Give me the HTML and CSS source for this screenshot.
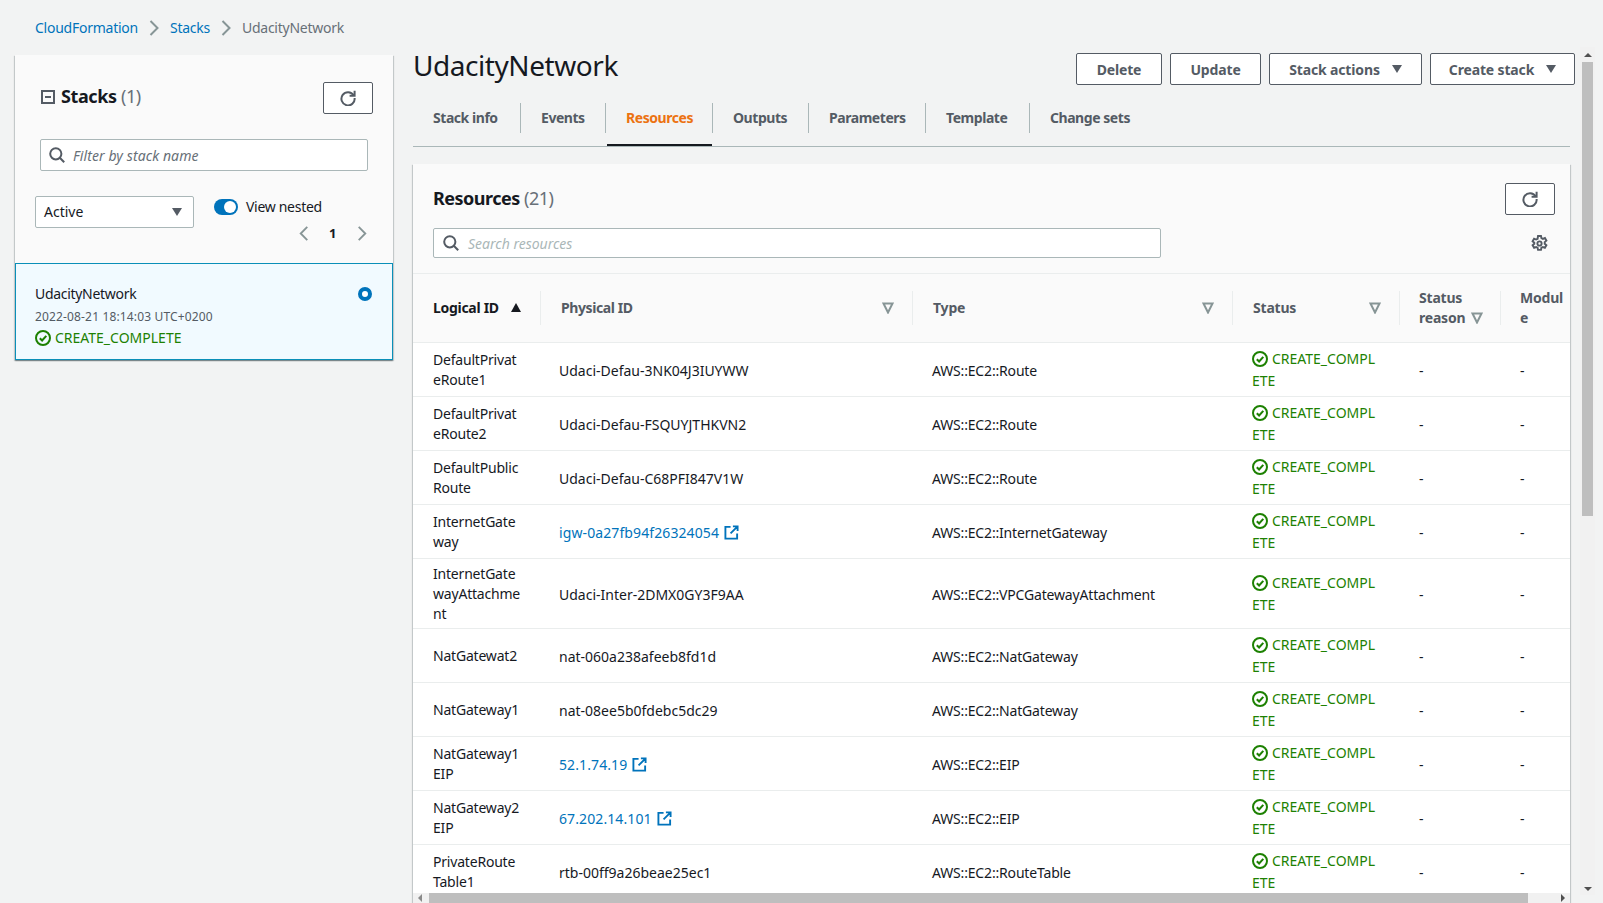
FILE: index.html
```html
<!DOCTYPE html>
<html>

<head>
    <meta charset="UTF-8">
    <title>UdacityNetwork - CloudFormation</title>
    <link rel="stylesheet" href="styles.css">
</head>

<body>
    <svg class="defs" width="0" height="0">
        <symbol id="i-ok" viewBox="0 0 16 16">
            <circle cx="8" cy="8" r="7" fill="none" stroke="currentColor" stroke-width="2"/>
            <path d="M4.8 8.2l2.3 2.3 4.2-4.6" fill="none" stroke="currentColor" stroke-width="2"/>
        </symbol>
        <symbol id="i-ext" viewBox="0 0 16 16">
            <path d="M7 2H1.5v12.5H14V9M9.5 1.5h5v5M14.5 1.5L7 9" fill="none" stroke="currentColor" stroke-width="2"/>
        </symbol>
        <symbol id="i-refresh" viewBox="0 0 16 16">
            <path d="M13.6 5.2A6.6 6.6 0 1 0 14.6 8" fill="none" stroke="currentColor" stroke-width="2"/>
            <path d="M14.6 .8v5h-5" fill="none" stroke="currentColor" stroke-width="2"/>
        </symbol>
        <symbol id="i-search" viewBox="0 0 16 16">
            <circle cx="6.8" cy="6.8" r="5.6" fill="none" stroke="currentColor" stroke-width="2"/>
            <path d="M10.8 10.8l4.4 4.4" fill="none" stroke="currentColor" stroke-width="2"/>
        </symbol>
        <symbol id="i-filter" viewBox="0 0 12 12">
            <path d="M1.5 1.5h9L6 10.5z" fill="none" stroke="currentColor" stroke-width="2"/>
        </symbol>
    </svg>

    <div class="page">
        <div class="crumbs">
            <a>CloudFormation</a>
            <svg class="crumb-sep" viewBox="0 0 10 16"><path d="M1.5 1l7 7-7 7" fill="none" stroke="currentColor" stroke-width="2"/></svg>
            <a>Stacks</a>
            <svg class="crumb-sep" viewBox="0 0 10 16"><path d="M1.5 1l7 7-7 7" fill="none" stroke="currentColor" stroke-width="2"/></svg>
            <span>UdacityNetwork</span>
        </div>

        <div class="layout">
            <!-- 左侧 stacks 列表 -->
            <div class="side">
                <div class="side-head">
                    <div class="side-title">
                        <svg class="collapse" viewBox="0 0 14 14"><path d="M1 1h12v12H1zM4 7h6" fill="none" stroke="currentColor" stroke-width="2"/></svg>
                        <h2>Stacks <span class="count">(1)</span></h2>
                    </div>
                    <button class="btn btn-icon"><svg class="icon"><use href="#i-refresh"/></svg></button>
                </div>
                <div class="input side-search">
                    <svg class="icon"><use href="#i-search"/></svg>
                    <span>Filter by stack name</span>
                </div>
                <div class="side-filters">
                    <div class="select">Active<i class="caret"></i></div>
                    <div class="side-opts">
                        <div class="nested"><i class="toggle"></i>View nested</div>
                        <div class="pager">
                            <svg class="pager-arrow" viewBox="0 0 10 16"><path d="M8.5 1l-7 7 7 7" fill="none" stroke="currentColor" stroke-width="2"/></svg>
                            <b>1</b>
                            <svg class="pager-arrow" viewBox="0 0 10 16"><path d="M1.5 1l7 7-7 7" fill="none" stroke="currentColor" stroke-width="2"/></svg>
                        </div>
                    </div>
                </div>
                <div class="stack-item">
                    <div class="stack-info">
                        <div class="stack-name">UdacityNetwork</div>
                        <div class="stack-date">2022-08-21 18:14:03 UTC+0200</div>
                        <div class="ok"><svg class="ok-icon"><use href="#i-ok"/></svg>CREATE_COMPLETE</div>
                    </div>
                    <i class="radio"></i>
                </div>
            </div>

            <!-- 右侧详情 -->
            <div class="main">
                <div class="main-head">
                    <h1>UdacityNetwork</h1>
                    <div class="actions">
                        <button class="btn btn-delete">Delete</button>
                        <button class="btn btn-update">Update</button>
                        <button class="btn btn-stack">Stack actions<i class="caret"></i></button>
                        <button class="btn btn-create">Create stack<i class="caret"></i></button>
                    </div>
                </div>
                <div class="tabs">
                    <a class="tab">Stack info</a>
                    <a class="tab">Events</a>
                    <a class="tab active">Resources</a>
                    <a class="tab">Outputs</a>
                    <a class="tab">Parameters</a>
                    <a class="tab">Template</a>
                    <a class="tab">Change sets</a>
                </div>

                <div class="card">
                    <div class="card-head">
                        <div class="card-top">
                            <h2>Resources <span class="count">(21)</span></h2>
                            <button class="btn btn-icon"><svg class="icon"><use href="#i-refresh"/></svg></button>
                        </div>
                        <div class="card-search">
                            <div class="input res-search">
                                <svg class="icon"><use href="#i-search"/></svg>
                                <span>Search resources</span>
                            </div>
                            <svg class="gear" viewBox="0 0 16 16">
                                <path d="M6.6 1h2.8l.4 2 1.4.7 1.9-.8 1.4 2.4-1.6 1.4v1.6l1.6 1.4-1.4 2.4-1.9-.8-1.4.7-.4 2H6.6l-.4-2-1.400-.7-1.900.8-1.400-2.400 1.600-1.400V7.300L1.500 5.900l1.400-2.400 1.900.8 1.400-.7z" fill="none" stroke="currentColor" stroke-width="1.800"/>
                                <circle cx="8" cy="8" r="2" fill="none" stroke="currentColor" stroke-width="1.800"/>
                            </svg>
                        </div>
                    </div>

                    <div class="table-wrap">
                        <table class="res-table">
                            <colgroup>
                                <col class="c-logical"><col class="c-physical"><col class="c-type"><col class="c-status"><col class="c-reason"><col class="c-module">
                            </colgroup>
                            <thead>
                                <tr>
                                    <th class="sorted"><div class="th-in">Logical ID<i class="sort-up"></i></div></th>
                                    <th><div class="th-in th-split">Physical ID<svg class="filter"><use href="#i-filter"/></svg></div></th>
                                    <th><div class="th-in th-split">Type<svg class="filter"><use href="#i-filter"/></svg></div></th>
                                    <th><div class="th-in th-split">Status<svg class="filter"><use href="#i-filter"/></svg></div></th>
                                    <th><div class="th-in"><span class="th-text">Status reason<svg class="filter filter-inline"><use href="#i-filter"/></svg></span></div></th>
                                    <th class="last"><div class="th-in"><span class="th-text">Module</span></div></th>
                                </tr>
                            </thead>
                            <tbody>
                                <tr>
                                    <td>DefaultPrivateRoute1</td>
                                    <td>Udaci-Defau-3NK04J3IUYWW</td>
                                    <td>AWS::EC2::Route</td>
                                    <td class="ok"><svg class="ok-icon"><use href="#i-ok"/></svg>CREATE_COMPLETE</td>
                                    <td>-</td>
                                    <td>-</td>
                                </tr>
                                <tr>
                                    <td>DefaultPrivateRoute2</td>
                                    <td>Udaci-Defau-FSQUYJTHKVN2</td>
                                    <td>AWS::EC2::Route</td>
                                    <td class="ok"><svg class="ok-icon"><use href="#i-ok"/></svg>CREATE_COMPLETE</td>
                                    <td>-</td>
                                    <td>-</td>
                                </tr>
                                <tr>
                                    <td>DefaultPublicRoute</td>
                                    <td>Udaci-Defau-C68PFI847V1W</td>
                                    <td>AWS::EC2::Route</td>
                                    <td class="ok"><svg class="ok-icon"><use href="#i-ok"/></svg>CREATE_COMPLETE</td>
                                    <td>-</td>
                                    <td>-</td>
                                </tr>
                                <tr>
                                    <td>InternetGateway</td>
                                    <td><a class="link">igw-0a27fb94f26324054<svg class="ext"><use href="#i-ext"/></svg></a></td>
                                    <td>AWS::EC2::InternetGateway</td>
                                    <td class="ok"><svg class="ok-icon"><use href="#i-ok"/></svg>CREATE_COMPLETE</td>
                                    <td>-</td>
                                    <td>-</td>
                                </tr>
                                <tr>
                                    <td>InternetGatewayAttachment</td>
                                    <td>Udaci-Inter-2DMX0GY3F9AA</td>
                                    <td>AWS::EC2::VPCGatewayAttachment</td>
                                    <td class="ok"><svg class="ok-icon"><use href="#i-ok"/></svg>CREATE_COMPLETE</td>
                                    <td>-</td>
                                    <td>-</td>
                                </tr>
                                <tr>
                                    <td>NatGatewat2</td>
                                    <td>nat-060a238afeeb8fd1d</td>
                                    <td>AWS::EC2::NatGateway</td>
                                    <td class="ok"><svg class="ok-icon"><use href="#i-ok"/></svg>CREATE_COMPLETE</td>
                                    <td>-</td>
                                    <td>-</td>
                                </tr>
                                <tr>
                                    <td>NatGateway1</td>
                                    <td>nat-08ee5b0fdebc5dc29</td>
                                    <td>AWS::EC2::NatGateway</td>
                                    <td class="ok"><svg class="ok-icon"><use href="#i-ok"/></svg>CREATE_COMPLETE</td>
                                    <td>-</td>
                                    <td>-</td>
                                </tr>
                                <tr>
                                    <td>NatGateway1EIP</td>
                                    <td><a class="link">52.1.74.19<svg class="ext"><use href="#i-ext"/></svg></a></td>
                                    <td>AWS::EC2::EIP</td>
                                    <td class="ok"><svg class="ok-icon"><use href="#i-ok"/></svg>CREATE_COMPLETE</td>
                                    <td>-</td>
                                    <td>-</td>
                                </tr>
                                <tr>
                                    <td>NatGateway2EIP</td>
                                    <td><a class="link">67.202.14.101<svg class="ext"><use href="#i-ext"/></svg></a></td>
                                    <td>AWS::EC2::EIP</td>
                                    <td class="ok"><svg class="ok-icon"><use href="#i-ok"/></svg>CREATE_COMPLETE</td>
                                    <td>-</td>
                                    <td>-</td>
                                </tr>
                                <tr>
                                    <td>PrivateRouteTable1</td>
                                    <td>rtb-00ff9a26beae25ec1</td>
                                    <td>AWS::EC2::RouteTable</td>
                                    <td class="ok"><svg class="ok-icon"><use href="#i-ok"/></svg>CREATE_COMPLETE</td>
                                    <td>-</td>
                                    <td>-</td>
                                </tr>
                            </tbody>
                        </table>
                    </div>

                    <!-- 横向滚动条 -->
                    <div class="hscroll">
                        <i class="arr-left"></i>
                        <div class="hscroll-thumb"></div>
                        <i class="arr-right"></i>
                    </div>
                </div>
            </div>

            <!-- 纵向滚动条 -->
            <div class="vscroll">
                <i class="arr-up"></i>
                <div class="vscroll-thumb"></div>
                <i class="arr-down"></i>
            </div>
        </div>
    </div>
</body>

</html>
```

FILE: styles.css
```css
* {
    margin: 0;
    padding: 0;
    box-sizing: border-box;
}

body {
    font-family: "Noto Sans", "Open Sans", sans-serif;
    font-size: 14px;
    line-height: 20px;
    color: #16191f;
    background-color: #f2f3f3;
}

.defs {
    position: absolute;
}

.page {
    height: 903px;
    overflow: hidden;
    display: flex;
    flex-direction: column;
}

.crumbs {
    display: flex;
    align-items: center;
    height: 55px;
    padding-left: 35px;
    color: #687078;
    letter-spacing: -0.25px;
}

.crumbs a {
    color: #0073bb;
}

.crumb-sep {
    width: 10px;
    height: 16px;
    margin: 0 11px;
    color: #879596;
}

.layout {
    flex: 1;
    min-height: 0;
    display: flex;
    padding-left: 15px;
}

/* left panel */
.side {
    width: 378px;
    height: 305px;
    background-color: #fafafa;
    box-shadow: 0 1px 1px 0 rgba(0, 28, 36, 0.3), 1px 1px 1px 0 rgba(0, 28, 36, 0.15), -1px 1px 1px 0 rgba(0, 28, 36, 0.15);
    display: flex;
    flex-direction: column;
}

.side-head {
    display: flex;
    justify-content: space-between;
    align-items: center;
    height: 32px;
    margin: 27px 20px 0 26px;
}

.side-title {
    display: flex;
    align-items: center;
    gap: 6px;
    margin-top: -4px;
}

.collapse {
    width: 14px;
    height: 14px;
    color: #545b64;
    margin-top: 2px;
}

h2 {
    font-size: 18px;
    line-height: 24px;
    font-weight: 700;
    letter-spacing: -0.4px;
}

.count {
    font-weight: 400;
    color: #687078;
}

.btn {
    height: 32px;
    border: 1px solid #545b64;
    border-radius: 2px;
    background-color: #fff;
    color: #545b64;
    font-family: inherit;
    font-size: 14px;
    font-weight: 700;
    letter-spacing: -0.15px;
    display: flex;
    align-items: center;
    justify-content: center;
}

.btn-icon {
    width: 50px;
}

.icon {
    width: 16px;
    height: 16px;
}

.input {
    display: flex;
    align-items: center;
    background-color: #fff;
    border: 1px solid #aab7b8;
    border-radius: 2px;
    color: #687078;
    font-style: italic;
}

.input span {
    padding-top: 1px;
}

.input .icon {
    color: #545b64;
    flex: none;
}

.side-search {
    height: 32px;
    margin: 25px 25px 0 25px;
    padding-left: 8px;
    gap: 8px;
    letter-spacing: 0.1px;
}

.side-filters {
    display: flex;
    margin: 25px 20px 0 20px;
    gap: 20px;
}

.select {
    width: 159px;
    height: 32px;
    background-color: #fff;
    border: 1px solid #aab7b8;
    border-radius: 2px;
    padding: 0 11px 0 8px;
    display: flex;
    align-items: center;
    justify-content: space-between;
}

.caret {
    width: 0;
    height: 0;
    border-left: 5.500px solid transparent;
    border-right: 5.500px solid transparent;
    border-top: 8px solid #545b64;
}

.side-opts {
    flex: 1;
}

.nested {
    display: flex;
    align-items: center;
    gap: 8px;
    height: 20px;
    margin-top: 1px;
    letter-spacing: -0.3px;
}

.toggle {
    width: 24px;
    height: 16px;
    border-radius: 8px;
    background-color: #0073bb;
    display: flex;
    justify-content: flex-end;
    align-items: center;
    padding-right: 2px;
}

.toggle::after {
    content: "";
    width: 12px;
    height: 12px;
    border-radius: 50%;
    background-color: #fff;
}

.pager {
    display: flex;
    align-items: center;
    justify-content: flex-end;
    gap: 20px;
    height: 20px;
    margin-top: 6px;
    padding-right: 6px;
}

.pager b {
    font-size: 13px;
    width: 7px;
    margin-right: 1px;
}

.pager-arrow {
    width: 10px;
    height: 15px;
    color: #879596;
}

.stack-item {
    flex: 1;
    margin-top: 20px;
    background-color: #f1faff;
    border: 1px solid #0a8fb8;
    display: flex;
    justify-content: space-between;
    padding: 19px 20px 0 19px;
}

.stack-name {
    letter-spacing: -0.3px;
    margin-top: 1px;
}

.stack-date {
    font-size: 12px;
    line-height: 18px;
    color: #545b64;
    margin-top: 4px;
    letter-spacing: 0.15px;
}

.stack-info .ok {
    margin-top: 2px;
}

.ok {
    color: #1d8102;
}

.ok-icon {
    width: 16px;
    height: 16px;
    margin-right: 4px;
    vertical-align: -3px;
}

.radio {
    width: 14px;
    height: 14px;
    border-radius: 50%;
    border: 4px solid #0073bb;
    background-color: #fff;
    margin-top: 4px;
}

/* right side */
.main {
    width: 1157px;
    margin-left: 20px;
    height: 848px;
    display: flex;
    flex-direction: column;
}

.main-head {
    display: flex;
    justify-content: space-between;
    margin: -2px -5px 0 0;
    height: 46px;
}

h1 {
    font-size: 28px;
    line-height: 40px;
    font-weight: 400;
    margin-top: -8px;
    letter-spacing: -0.44px;
}

.actions {
    display: flex;
    gap: 8px;
}

.btn-delete { width: 86px; }
.btn-update { width: 91px; }
.btn-stack { width: 153px; gap: 12px; }
.btn-create { width: 145px; gap: 12px; }

.tabs {
    display: grid;
    grid-template-columns: 108px 85px 107px 96px 117px 104px 1fr;
    height: 45px;
    margin-top: 3px;
    padding-top: 1px;
    border-bottom: 1px solid #aab7b8;
}

.tab {
    height: 30px;
    padding-left: 20px;
    font-weight: 700;
    color: #545b64;
    position: relative;
    line-height: 30px;
    letter-spacing: -0.45px;
    border-right: 1px solid #aab7b8;
}

.tab:last-child {
    border-right: 0;
}

.tab.active {
    color: #ec7211;
}

.tab.active::after {
    content: "";
    position: absolute;
    left: 1px;
    right: 0;
    top: 41px;
    height: 2px;
    background-color: #16191f;
}

.card {
    margin-top: 17px;
    flex: 1;
    min-height: 0;
    display: flex;
    flex-direction: column;
    background-color: #fff;
    box-shadow: 0 1px 1px 0 rgba(0, 28, 36, 0.3), 1px 1px 1px 0 rgba(0, 28, 36, 0.15), -1px 1px 1px 0 rgba(0, 28, 36, 0.15);
}

.card-head {
    height: 110px;
    flex: none;
    background-color: #fafafa;
    border-bottom: 1px solid #eaeded;
    padding: 19px 15px 0 20px;
}

.card-top {
    display: flex;
    justify-content: space-between;
    align-items: center;
}

.card-top h2 {
    margin-top: -2px;
    letter-spacing: -0.5px;
}

.card-search {
    display: flex;
    justify-content: space-between;
    align-items: center;
    margin-top: 13px;
    padding-right: 7px;
}

.res-search {
    width: 728px;
    height: 30px;
    padding-left: 9px;
    gap: 9px;
    color: #aab7b8;
}

.gear {
    width: 17px;
    height: 17px;
    color: #545b64;
}

.table-wrap {
    flex: 1;
    min-height: 0;
    overflow: hidden;
}

.res-table {
    width: 100%;
    table-layout: fixed;
    border-collapse: collapse;
}

.c-logical { width: 128px; }
.c-physical { width: 372px; }
.c-type { width: 320px; }
.c-status { width: 167px; }
.c-reason { width: 101px; }
.c-module { width: 69px; }

.res-table th {
    height: 68px;
    background-color: #fafafa;
    border-bottom: 1px solid #eaeded;
    text-align: left;
    color: #545b64;
    font-weight: 700;
    letter-spacing: -0.2px;
    vertical-align: middle;
}

.th-in {
    height: 34px;
    padding: 0 18px 0 20px;
    border-right: 1px solid #eaeded;
    display: flex;
    align-items: center;
}

.res-table th:nth-child(2) {
    letter-spacing: -0.4px;
}

.res-table th:nth-child(n+5) .th-in {
    padding-left: 19px;
}

.th-split {
    justify-content: space-between;
}

.th-text {
    min-width: 0;
    overflow-wrap: anywhere;
}

.res-table th:nth-child(5) .th-in {
    padding-right: 10px;
}

.last .th-in {
    border-right: 0;
    padding-right: 5px;
}

.res-table th.sorted {
    color: #16191f;
    letter-spacing: -0.3px;
}

.sorted .th-in {
    white-space: nowrap;
    padding-right: 0;
}

.sort-up {
    width: 0;
    height: 0;
    margin-left: 12px;
    border-left: 5.500px solid transparent;
    border-right: 5.500px solid transparent;
    border-bottom: 9px solid #16191f;
    flex: none;
}

.filter {
    width: 12px;
    height: 12px;
    color: #879596;
    flex: none;
}

.filter-inline {
    margin-left: 6px;
    vertical-align: -1px;
}

.res-table td {
    padding: 6px 19px 3px;
    border-bottom: 1px solid #eaeded;
    overflow-wrap: anywhere;
    vertical-align: middle;
}

.res-table td:first-child {
    padding: 5px 19px 4px 20px;
    letter-spacing: -0.2px;
}

.res-table td:nth-child(2) {
    padding-left: 18px;
}

.res-table td:nth-child(3) {
    letter-spacing: -0.17px;
}

.res-table td.ok {
    padding: 5px 19px 4px;
    line-height: 22px;
    word-break: break-all;
}

.link {
    color: #0073bb;
    letter-spacing: 0.1px;
}

.ext {
    width: 15px;
    height: 15px;
    margin-left: 5px;
    vertical-align: -2px;
}

.hscroll {
    flex: none;
    height: 10px;
    background-color: #f1f1f1;
    display: flex;
    align-items: center;
    padding: 0 5px;
}

.hscroll-thumb {
    width: 1099px;
    height: 10px;
    margin-left: 7px;
    background-color: #bebebe;
}

.arr-left {
    width: 0;
    height: 0;
    border-top: 4px solid transparent;
    border-bottom: 4px solid transparent;
    border-right: 4px solid #8a8a8a;
}

.arr-right {
    width: 0;
    height: 0;
    margin-left: auto;
    border-top: 4px solid transparent;
    border-bottom: 4px solid transparent;
    border-left: 4px solid #505050;
}

.vscroll {
    width: 15px;
    height: 848px;
    margin-left: 10px;
    margin-top: -8px;
    background-color: #f1f1f1;
    display: flex;
    flex-direction: column;
    align-items: center;
    padding-top: 6px;
}

.vscroll-thumb {
    width: 11px;
    height: 454px;
    margin-top: 5px;
    background-color: #bebebe;
}

.arr-up {
    width: 0;
    height: 0;
    border-left: 4px solid transparent;
    border-right: 4px solid transparent;
    border-bottom: 4px solid #505050;
}

.arr-down {
    width: 0;
    height: 0;
    margin-top: auto;
    margin-bottom: 4px;
    border-left: 4px solid transparent;
    border-right: 4px solid transparent;
    border-top: 4px solid #505050;
}
```
